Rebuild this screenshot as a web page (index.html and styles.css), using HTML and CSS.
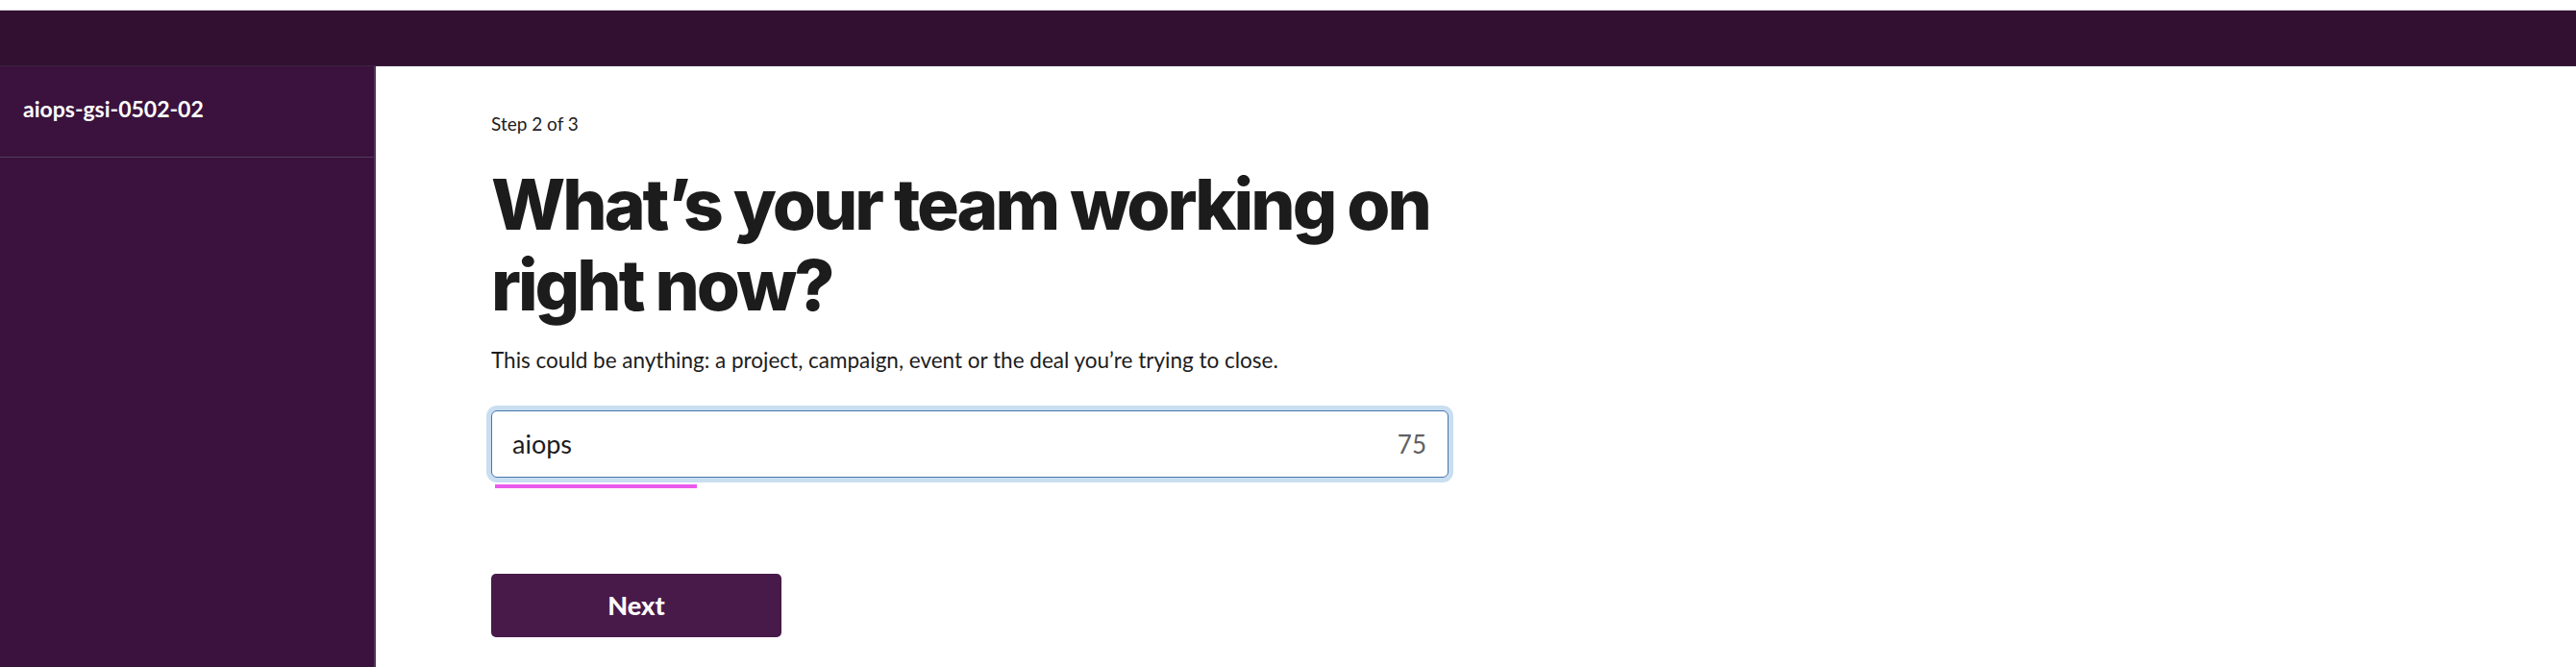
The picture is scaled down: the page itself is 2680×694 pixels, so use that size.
FILE: index.html
```html
<!DOCTYPE html>
<html lang="en">
<head>
<meta charset="utf-8">
<title>Step 2 of 3</title>
<link rel="stylesheet" href="styles.css">
</head>
<body>
<div class="chrome"></div>
<header class="topbar"></header>
<div class="layout">
  <aside class="sidebar">
    <div class="team">aiops-gsi-0502-02</div>
  </aside>
  <main class="main">
    <div class="content">
      <p class="step">Step 2 of 3</p>
      <h1 class="title">What’s your team working on right now?</h1>
      <p class="desc">This could be anything: a project, campaign, event or the deal you’re trying to close.</p>
      <div class="field">
        <input class="input" type="text" value="aiops">
        <span class="count">75</span>
      </div>
      <div class="spell"></div>
      <button class="next" type="button">Next</button>
    </div>
  </main>
</div>
</body>
</html>
```
FILE: styles.css
```css
* { box-sizing: border-box; }
html, body { margin: 0; padding: 0; }
body {
  height: 694px;
  overflow: hidden;
  background: #ffffff;
  font-family: "Lato", "Liberation Sans", sans-serif;
  color: #1d1c1d;
}
.chrome {
  height: 11px;
  background: #ffffff;
  border-bottom: 1px solid #d6d6d8;
}
.topbar {
  height: 58px;
  background: #311031;
  border-bottom: 1px solid #3e2240;
}
.layout {
  display: flex;
  height: 625px;
}
.sidebar {
  width: 391px;
  flex: 0 0 391px;
  background: #3a123d;
  border-right: 2px solid #52355a;
}
.team {
  height: 95px;
  padding: 31px 0 0 24px;
  border-bottom: 1px solid #543a59;
  color: #ffffff;
  font-weight: 700;
  font-size: 23px;
  line-height: 1.2;
}
.main {
  flex: 1;
  padding: 49px 0 0 120px;
}
.content {
  width: 996px;
}
.step {
  margin: 0;
  font-size: 19px;
  line-height: 1.2;
  color: #1d1c1d;
}
.title {
  margin: 30px 0 0;
  font-family: "Inter", "Lato", sans-serif;
  font-weight: 800;
  font-size: 73px;
  line-height: 84px;
  letter-spacing: -3px;
  color: #1d1c1d;
}
.desc {
  margin: 22px 0 0;
  font-size: 22.5px;
  line-height: 1.2;
  color: #1d1c1d;
}
.field {
  margin-top: 39px;
  height: 70px;
  display: flex;
  align-items: center;
  padding: 0 22px 0 21px;
  border: 1px solid #4776ab;
  border-radius: 6px;
  box-shadow: 0 0 0 5px #c9def0;
  background: #ffffff;
}
.input {
  flex: 1;
  min-width: 0;
  border: 0;
  outline: none;
  padding: 0;
  background: transparent;
  font-family: "Lato", "Liberation Sans", sans-serif;
  font-size: 27px;
  color: #1d1c1d;
}
.count {
  font-size: 26px;
  color: #616061;
}
.spell {
  margin: 7px 0 0 4px;
  width: 210px;
  height: 4px;
  background: #ec5aec;
}
.next {
  margin-top: 89px;
  width: 302px;
  height: 66px;
  border: 0;
  border-radius: 5px;
  background: #481a4a;
  color: #ffffff;
  font-family: "Lato", "Liberation Sans", sans-serif;
  font-weight: 900;
  font-size: 27px;
  cursor: pointer;
}
```
